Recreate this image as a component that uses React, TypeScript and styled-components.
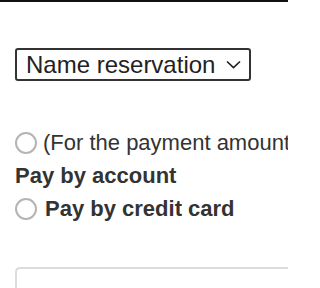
import React from "react";
import styled, { createGlobalStyle } from "styled-components";

const Global = createGlobalStyle`
  html, body { margin: 0; padding: 0; background: #fff; }
  body { font-family: "Liberation Sans", Arial, sans-serif; overflow: hidden; }
`;

const Page = styled.div`
  width: 288px;
  height: 288px;
  overflow: hidden;
  border-top: 2px solid #111;
  box-sizing: border-box;
  padding: 46px 0 0 15px;
`;

const Select = styled.div`
  box-sizing: border-box;
  width: 236px;
  height: 33px;
  border: 2px solid #333;
  border-radius: 3px;
  display: flex;
  align-items: center;
  justify-content: space-between;
  padding: 0 8px 0 9px;
  font-size: 24px;
  color: #222;
  white-space: nowrap;
`;

const Options = styled.div`
  margin-top: 45px;
  display: flex;
  flex-direction: column;
`;

const Row = styled.div<{ $gap: number }>`
  height: 33px;
  display: flex;
  align-items: center;
  gap: ${(p) => p.$gap}px;
  white-space: nowrap;
  font-size: 22px;
  color: #333;
`;

const Radio = styled.span`
  flex: none;
  box-sizing: border-box;
  width: 22px;
  height: 22px;
  border-radius: 50%;
  border: 2px solid #b4b4b4;
  background: #fff;
`;

const Label = styled.span<{ $bold?: boolean }>`
  font-weight: ${(p) => (p.$bold ? 700 : 400)};
`;

const Box = styled.div`
  margin-top: 42px;
  height: 60px;
  border: 2px solid #dcdcdc;
  border-right: none;
  border-radius: 5px 0 0 0;
`;

export default function App() {
  return (
    <>
      <Global />
      <Page>
        <Select>
          <span>Name reservation</span>
          <svg width="15" height="9" viewBox="0 0 15 9" fill="none">
            <path d="M1 1.5l6.5 6 6.5-6" stroke="#222" strokeWidth="1.7" />
          </svg>
        </Select>
        <Options>
          <Row $gap={6}>
            <Radio />
            <Label>(For the payment amount</Label>
          </Row>
          <Row $gap={0}>
            <Label $bold>Pay by account</Label>
          </Row>
          <Row $gap={8}>
            <Radio />
            <Label $bold>Pay by credit card</Label>
          </Row>
        </Options>
        <Box />
      </Page>
    </>
  );
}
